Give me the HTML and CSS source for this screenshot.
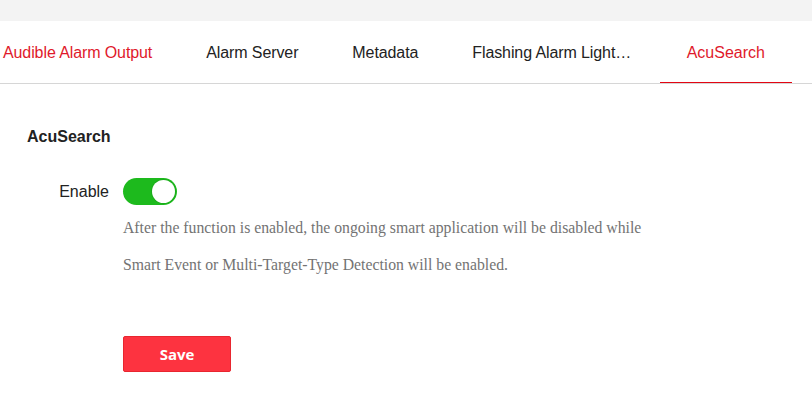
FILE: index.html
```html
<!DOCTYPE html>
<html>
<head>
<meta charset="utf-8">
<link rel="stylesheet" href="styles.css">
</head>
<body>
<div class="topbar"></div>
<div class="tabs">
  <div class="tab-list">
    <div class="tab active-text">Audible Alarm Output</div>
    <div class="tab">Alarm Server</div>
    <div class="tab">Metadata</div>
    <div class="tab">Flashing Alarm Light<span class="ell">…</span></div>
    <div class="tab active">AcuSearch</div>
  </div>
</div>
<div class="content">
  <div class="section-title">AcuSearch</div>
  <div class="form-row">
    <div class="label">Enable</div>
    <div class="switch on"><span class="knob"></span></div>
  </div>
  <p class="desc">After the function is enabled, the ongoing smart application will be disabled while<br>Smart Event or Multi-Target-Type Detection will be enabled.</p>
  <div class="actions">
    <button class="btn-save">Save</button>
  </div>
</div>
</body>
</html>
```
FILE: styles.css
```css
html, body {
  margin: 0;
  padding: 0;
  background: #fff;
}
body {
  font-family: "Liberation Sans", Arial, sans-serif;
  color: #222;
  width: 812px;
  height: 414px;
  overflow: hidden;
}
.topbar {
  height: 21px;
  background: #f3f3f3;
}
.tabs {
  height: 62px;
  border-bottom: 1px solid #d6d6d6;
  overflow: hidden;
}
.tab-list {
  display: flex;
  margin-left: -24px;
  height: 62px;
}
.tab {
  position: relative;
  padding: 1px 27px 0;
  line-height: 61px;
  font-size: 16px;
  letter-spacing: -0.1px;
  color: #222;
  white-space: nowrap;
}
.ell {
  letter-spacing: -0.6px;
  margin-right: 2px;
}
.tab.active-text {
  color: #e0192b;
}
.tab.active {
  color: #e0192b;
  letter-spacing: 0;
}
.tab.active::after {
  content: "";
  position: absolute;
  left: 0;
  right: 0;
  bottom: -1px;
  height: 2px;
  background: #e30613;
}
.content {
  padding: 44px 0 0 27px;
}
.section-title {
  font-size: 16px;
  font-weight: bold;
  line-height: 18px;
  color: #222;
}
.form-row {
  display: flex;
  align-items: center;
  margin-top: 32px;
}
.label {
  width: 82px;
  text-align: right;
  font-size: 16px;
  color: #222;
  margin-right: 14px;
}
.switch {
  width: 54px;
  height: 27px;
  border-radius: 14px;
  background: #1dba1d;
  display: flex;
  align-items: center;
  justify-content: flex-end;
  padding: 0 2px;
  box-sizing: border-box;
}
.knob {
  width: 23px;
  height: 23px;
  border-radius: 50%;
  background: #fff;
  box-shadow: 0 0 0 1px rgba(0,0,0,0.08);
}
.desc {
  margin: 4px 0 0 96px;
  font-family: "Liberation Serif", "Times New Roman", serif;
  font-size: 15.75px;
  line-height: 37px;
  color: #737373;
}
.actions {
  margin: 53px 0 0 96px;
}
.btn-save {
  width: 108px;
  height: 36px;
  border: 1px solid #e8262f;
  border-radius: 2px;
  background: #fd3340;
  color: #fff;
  font-family: "Open Sans", "Liberation Sans", sans-serif;
  font-weight: bold;
  font-size: 15px;
  padding: 0;
  cursor: pointer;
}
```
